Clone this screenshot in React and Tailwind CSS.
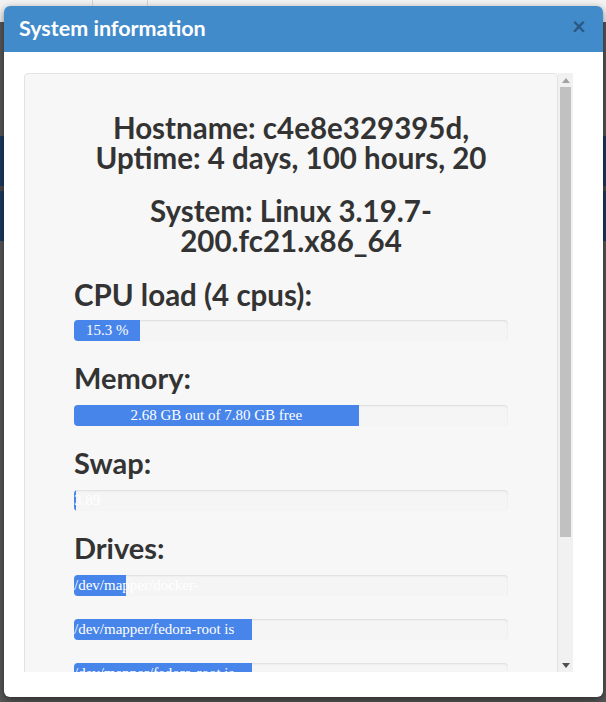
import React from 'react';

const sans = { fontFamily: 'Lato, "Open Sans", sans-serif' };

const ProgressBar = ({ percent, label, align = 'text-center' }) => (
  <div className="h-[21px] rounded-[4px] bg-[#f5f5f5] shadow-[inset_0_1px_2px_rgba(0,0,0,0.1)] overflow-hidden">
    <div
      className={`h-full bg-[#4885ea] text-white text-[15px] leading-[21px] font-['Liberation_Serif',serif] ${align}`}
      style={{ width: `${percent}%` }}
    >
      {label}
    </div>
  </div>
);

const drives = [
  { name: '/dev/mapper/docker-thinpool is 12% full', percent: 12 },
  { name: '/dev/mapper/fedora-root is 41% full', percent: 41 },
  { name: '/dev/mapper/fedora-root is 41% full', percent: 41 },
  { name: '/dev/sda1 is 28% full', percent: 28 },
  { name: '/dev/mapper/fedora-home is 9% full', percent: 9 },
  { name: '/dev/sdb1 is 54% full', percent: 54 },
];

const Scrollbar = () => (
  <div className="w-[15px] h-full bg-[#f1f1f1] flex flex-col items-center">
    <div className="h-[14px] w-full flex items-center justify-center">
      <div className="w-0 h-0 border-l-[4px] border-r-[4px] border-b-[5px] border-l-transparent border-r-transparent border-b-[#a3a3a3]" />
    </div>
    <div className="w-[11px] h-[450px] bg-[#c1c1c1]" />
    <div className="flex-1" />
    <div className="h-[14px] w-full flex items-center justify-center">
      <div className="w-0 h-0 border-l-[4px] border-r-[4px] border-t-[5px] border-l-transparent border-r-transparent border-t-[#505050]" />
    </div>
  </div>
);

const App = () => {
  return (
    <div className="relative h-screen overflow-hidden bg-[#585858]" style={sans}>
      {/* page behind the overlay */}
      <div className="h-[22px] bg-[#f3f3f3] flex text-[14px]">
        <div className="w-[93px] pl-[20px] pt-[2px] text-[#a9b6c4] border-r border-[#d5d5d5]">Database</div>
        <div className="w-[55px] pl-[14px] pt-[2px] text-[#3b78c4] border-r border-[#d5d5d5]">Playlists</div>
      </div>
      <div className="h-[114px]" />
      <div className="h-[50px] bg-[#1d3a63]" />
      <div className="h-[5px] bg-[#4a4a4a]" />
      <div className="h-[50px] bg-[#1d3a63]" />

      {/* modal */}
      <div className="absolute left-[4px] top-[6px] w-[599px] h-[691px] bg-white rounded-[6px] overflow-hidden shadow-[0_3px_9px_rgba(0,0,0,0.5)]">
        <div className="h-[46px] bg-[#428bca] flex items-center justify-between pl-[15px] pr-[17px]">
          <h4 className="text-white text-[21.5px] font-bold leading-none">System information</h4>
          <button className="text-[#2a5884] text-[24px] font-bold leading-none -mt-[7px]">×</button>
        </div>
        <div className="pt-[21px] pl-[20px]">
          <div className="w-[549px] h-[599px] flex">
            <div className="w-[534px] h-full overflow-hidden">
              <div className="bg-[#f7f7f7] border border-[#e3e3e3] rounded-[4px] px-[49px] pt-[39px] pb-[19px] text-[#333]">
                <h2 className="text-center text-[29.5px] font-bold leading-[30px]">
                  Hostname: c4e8e329395d,
                  <br />
                  Uptime: 4 days, 100 hours, 20
                </h2>
                <h2 className="text-center text-[29.5px] font-bold leading-[30px] mt-[23px]">
                  System: Linux 3.19.7-
                  <br />
                  200.fc21.x86_64
                </h2>

                <h3 className="text-[29.5px] font-bold leading-[30px] mt-[24px] mb-[10px]">CPU load (4 cpus):</h3>
                <ProgressBar percent={15.3} label="15.3 %" />

                <h3 className="text-[29px] font-bold leading-[30px] mt-[22px] mb-[12px]">Memory:</h3>
                <ProgressBar percent={65.6} label="2.68 GB out of 7.80 GB free" />

                <h3 className="text-[29px] font-bold leading-[30px] mt-[22px] mb-[12px]">Swap:</h3>
                <ProgressBar percent={0.5} label="3.89 GB out of 3.89 GB free" />

                <h3 className="text-[29px] font-bold leading-[30px] mt-[22px] mb-[12px]">Drives:</h3>
                <div className="flex flex-col gap-[23px]">
                  {drives.map((drive, index) => (
                    <ProgressBar key={index} percent={drive.percent} label={drive.name} align="text-left" />
                  ))}
                </div>
              </div>
            </div>
            <Scrollbar />
          </div>
        </div>
      </div>
    </div>
  );
};

export default App;
